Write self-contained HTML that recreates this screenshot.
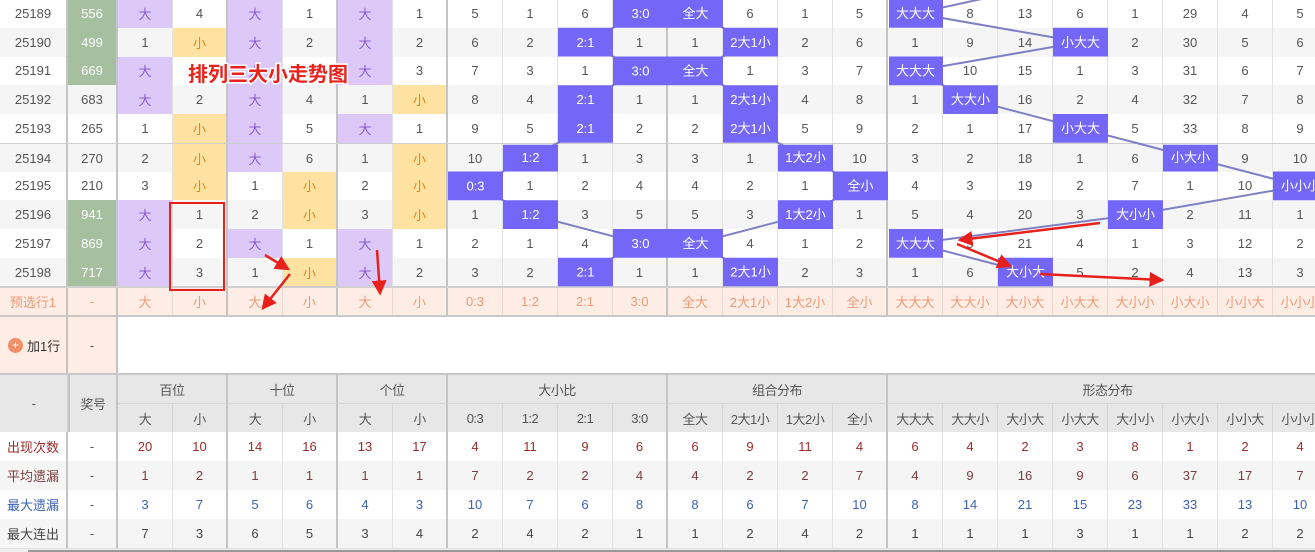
<!DOCTYPE html>
<html><head><meta charset="utf-8"><style>
*{box-sizing:border-box;margin:0;padding:0}
body{width:1315px;height:552px;overflow:hidden;background:#fff;font-family:"Liberation Sans","Noto Sans CJK SC",sans-serif;font-size:13px;color:#555;position:relative}
.r{position:absolute;left:0;display:grid;grid-template-columns:68px 50px repeat(22,55px);width:1328px}
.r i{font-style:normal;display:flex;align-items:center;justify-content:center;border-right:1px solid #e2e2e2;white-space:nowrap}
.r i:nth-child(1),.r i:nth-child(2),.r i:nth-child(4),.r i:nth-child(6),.r i:nth-child(8),.r i:nth-child(12),.r i:nth-child(16){border-right:2px solid #c4c4c4}
.d{height:28.75px}
.w{background:#fff}.s{background:#f5f5f5}
.p{background:#dcc9f7;color:#8a5bd0}
.y{background:#fde2a1;color:#e2861d}
.gr{background:#a6bf9f;color:#fff}
.pre{background:#fdede5;color:#ef9a78;border-bottom:2px solid #c8c8c8}
.pre i{border-right-color:#e8d8d0}
.hd{position:absolute;left:0;top:373px;display:grid;grid-template-columns:68px 50px repeat(22,55px);grid-template-rows:29px 29px;width:1328px;background:#e7e7e7;color:#555;border-top:2px solid #c8c8c8}
.hd i{font-style:normal;display:flex;align-items:center;justify-content:center;border-right:1px solid #d6d6d6;border-bottom:1px solid #d6d6d6;white-space:nowrap;letter-spacing:-0.5px}
.hd .G{border-right:2px solid #c4c4c4}
.c1{color:#9b2b2b}.c2{color:#7a3d3d}.c3{color:#3b63b3}.c4{color:#444}
</style></head><body>

<div class="r d w" style="top:-1px"><i>25189</i><i class="gr">556</i><i class="p">大</i><i>4</i><i class="p">大</i><i>1</i><i class="p">大</i><i>1</i><i>5</i><i>1</i><i>6</i><i></i><i></i><i>6</i><i>1</i><i>5</i><i></i><i>8</i><i>13</i><i>6</i><i>1</i><i>29</i><i>4</i><i>5</i></div>
<div class="r d s" style="top:27.75px"><i>25190</i><i class="gr">499</i><i>1</i><i class="y">小</i><i class="p">大</i><i>2</i><i class="p">大</i><i>2</i><i>6</i><i>2</i><i></i><i>1</i><i>1</i><i></i><i>2</i><i>6</i><i>1</i><i>9</i><i>14</i><i></i><i>2</i><i>30</i><i>5</i><i>6</i></div>
<div class="r d w" style="top:56.5px"><i>25191</i><i class="gr">669</i><i class="p">大</i><i>1</i><i class="p">大</i><i>3</i><i class="p">大</i><i>3</i><i>7</i><i>3</i><i>1</i><i></i><i></i><i>1</i><i>3</i><i>7</i><i></i><i>10</i><i>15</i><i>1</i><i>3</i><i>31</i><i>6</i><i>7</i></div>
<div class="r d s" style="top:85.25px"><i>25192</i><i>683</i><i class="p">大</i><i>2</i><i class="p">大</i><i>4</i><i>1</i><i class="y">小</i><i>8</i><i>4</i><i></i><i>1</i><i>1</i><i></i><i>4</i><i>8</i><i>1</i><i></i><i>16</i><i>2</i><i>4</i><i>32</i><i>7</i><i>8</i></div>
<div class="r d w" style="top:114px;border-bottom:2px solid #cfcfcf;height:30.75px"><i>25193</i><i>265</i><i>1</i><i class="y">小</i><i class="p">大</i><i>5</i><i class="p">大</i><i>1</i><i>9</i><i>5</i><i></i><i>2</i><i>2</i><i></i><i>5</i><i>9</i><i>2</i><i>1</i><i>17</i><i></i><i>5</i><i>33</i><i>8</i><i>9</i></div>
<div class="r d s" style="top:143.75px"><i>25194</i><i>270</i><i>2</i><i class="y">小</i><i class="p">大</i><i>6</i><i>1</i><i class="y">小</i><i>10</i><i></i><i>1</i><i>3</i><i>3</i><i>1</i><i></i><i>10</i><i>3</i><i>2</i><i>18</i><i>1</i><i>6</i><i></i><i>9</i><i>10</i></div>
<div class="r d w" style="top:171.5px"><i>25195</i><i>210</i><i>3</i><i class="y">小</i><i>1</i><i class="y">小</i><i>2</i><i class="y">小</i><i></i><i>1</i><i>2</i><i>4</i><i>4</i><i>2</i><i>1</i><i></i><i>4</i><i>3</i><i>19</i><i>2</i><i>7</i><i>1</i><i>10</i><i></i></div>
<div class="r d s" style="top:200.25px"><i>25196</i><i class="gr">941</i><i class="p">大</i><i>1</i><i>2</i><i class="y">小</i><i>3</i><i class="y">小</i><i>1</i><i></i><i>3</i><i>5</i><i>5</i><i>3</i><i></i><i>1</i><i>5</i><i>4</i><i>20</i><i>3</i><i></i><i>2</i><i>11</i><i>1</i></div>
<div class="r d w" style="top:229px"><i>25197</i><i class="gr">869</i><i class="p">大</i><i>2</i><i class="p">大</i><i>1</i><i class="p">大</i><i>1</i><i>2</i><i>1</i><i>4</i><i></i><i></i><i>4</i><i>1</i><i>2</i><i></i><i>5</i><i>21</i><i>4</i><i>1</i><i>3</i><i>12</i><i>2</i></div>
<div class="r d s" style="top:257.75px;border-bottom:2px solid #cfcfcf;height:30.5px"><i>25198</i><i class="gr">717</i><i class="p">大</i><i>3</i><i>1</i><i class="y">小</i><i class="p">大</i><i>2</i><i>3</i><i>2</i><i></i><i>1</i><i>1</i><i></i><i>2</i><i>3</i><i>1</i><i>6</i><i></i><i>5</i><i>2</i><i>4</i><i>13</i><i>3</i></div>
<div class="r pre" style="top:288px;height:29px"><i>预选行1</i><i>-</i><i>大</i><i>小</i><i>大</i><i>小</i><i>大</i><i>小</i><i>0:3</i><i>1:2</i><i>2:1</i><i>3:0</i><i>全大</i><i>2大1小</i><i>1大2小</i><i>全小</i><i>大大大</i><i>大大小</i><i>大小大</i><i>小大大</i><i>大小小</i><i>小大小</i><i>小小大</i><i>小小小</i></div>
<div class="r" style="top:317px;height:56px;grid-template-columns:68px 50px 1210px"><i style="background:#fdede5;color:#333;justify-content:flex-start;padding-left:8px"><span style="display:inline-block;width:15px;height:15px;border-radius:50%;background:#f0906a;color:#fff;font-size:12px;line-height:15px;text-align:center;margin-right:4px">+</span>加1行</i><i style="background:#fdede5">-</i><i style="border:none"></i></div>

<div class="hd">
<i style="grid-row:1/3">-</i><i class="G" style="grid-row:1/3;border-left:2px solid #c4c4c4">奖号</i>
<i class="G" style="grid-column:3/5">百位</i><i class="G" style="grid-column:5/7">十位</i><i class="G" style="grid-column:7/9">个位</i><i class="G" style="grid-column:9/13">大小比</i><i class="G" style="grid-column:13/17">组合分布</i><i style="grid-column:17/25">形态分布</i>
<i>大</i><i class="G">小</i><i>大</i><i class="G">小</i><i>大</i><i class="G">小</i><i>0:3</i><i>1:2</i><i>2:1</i><i class="G">3:0</i><i>全大</i><i>2大1小</i><i>1大2小</i><i class="G">全小</i><i>大大大</i><i>大大小</i><i>大小大</i><i>小大大</i><i>大小小</i><i>小大小</i><i>小小大</i><i>小小小</i>
</div>
<div class="r w c1" style="top:432px;height:29px"><i>出现次数</i><i style="color:#555">-</i><i>20</i><i>10</i><i>14</i><i>16</i><i>13</i><i>17</i><i>4</i><i>11</i><i>9</i><i>6</i><i>6</i><i>9</i><i>11</i><i>4</i><i>6</i><i>4</i><i>2</i><i>3</i><i>8</i><i>1</i><i>2</i><i>4</i></div>
<div class="r s c2" style="top:461px;height:29px"><i>平均遗漏</i><i style="color:#555">-</i><i>1</i><i>2</i><i>1</i><i>1</i><i>1</i><i>1</i><i>7</i><i>2</i><i>2</i><i>4</i><i>4</i><i>2</i><i>2</i><i>7</i><i>4</i><i>9</i><i>16</i><i>9</i><i>6</i><i>37</i><i>17</i><i>7</i></div>
<div class="r w c3" style="top:490px;height:29px"><i>最大遗漏</i><i style="color:#555">-</i><i>3</i><i>7</i><i>5</i><i>6</i><i>4</i><i>3</i><i>10</i><i>7</i><i>6</i><i>8</i><i>8</i><i>6</i><i>7</i><i>10</i><i>8</i><i>14</i><i>21</i><i>15</i><i>23</i><i>33</i><i>13</i><i>10</i></div>
<div class="r s c4" style="top:519px;height:29px"><i>最大连出</i><i style="color:#555">-</i><i>7</i><i>3</i><i>6</i><i>5</i><i>3</i><i>4</i><i>2</i><i>4</i><i>2</i><i>1</i><i>1</i><i>2</i><i>4</i><i>2</i><i>1</i><i>1</i><i>1</i><i>3</i><i>1</i><i>1</i><i>2</i><i>2</i></div>
<div style="position:absolute;left:0;top:548px;width:1315px;height:4px;background:#f0f0f0;border-top:1px solid #ddd"></div>
<div style="position:absolute;left:28px;top:550px;width:1287px;height:2px;background:#999"></div>

<svg width="1315" height="552" style="position:absolute;left:0;top:0" font-family="Liberation Sans, Noto Sans CJK SC, sans-serif" font-size="13">
<defs><marker id="ah" markerWidth="6" markerHeight="6" refX="5" refY="3" orient="auto"><path d="M0,0 L6,3 L0,6 z" fill="#e8201c"/></marker></defs>
<g stroke="#7f7fc4" stroke-width="2" fill="none">
<polyline points="610,-5 640.5,13.4 585.5,42.1 640.5,70.9 585.5,99.6 585.5,128.4 530.5,157.1 475.5,185.9 530.5,214.6 640.5,243.4 585.5,272.1"/>
<polyline points="695.5,13.4 750.5,42.1 695.5,70.9 750.5,99.6 750.5,128.4 805.5,157.1 860.5,185.9 805.5,214.6 695.5,243.4 750.5,272.1"/>
<polyline points="1000,-5 915.5,13.4 1080.5,42.1 915.5,70.9 970.5,99.6 1080.5,128.4 1190.5,157.1 1300.5,185.9 1135.5,214.6 915.5,243.4 1025.5,272.1"/>
</g>
<g fill="#7467f8">
<rect x="613" y="-1" width="55" height="28.75"/><rect x="558" y="27.75" width="55" height="28.75"/><rect x="613" y="56.5" width="55" height="28.75"/><rect x="558" y="85.25" width="55" height="28.75"/><rect x="558" y="114" width="55" height="28.75"/><rect x="503" y="144.75" width="55" height="26.75"/><rect x="448" y="171.5" width="55" height="28.75"/><rect x="503" y="200.25" width="55" height="28.75"/><rect x="613" y="229" width="55" height="28.75"/><rect x="558" y="257.75" width="55" height="28.5"/>
<rect x="668" y="-1" width="55" height="28.75"/><rect x="723" y="27.75" width="55" height="28.75"/><rect x="668" y="56.5" width="55" height="28.75"/><rect x="723" y="85.25" width="55" height="28.75"/><rect x="723" y="114" width="55" height="28.75"/><rect x="778" y="144.75" width="55" height="26.75"/><rect x="833" y="171.5" width="55" height="28.75"/><rect x="778" y="200.25" width="55" height="28.75"/><rect x="668" y="229" width="55" height="28.75"/><rect x="723" y="257.75" width="55" height="28.5"/>
<rect x="889" y="-1" width="54" height="28.75"/><rect x="1053" y="27.75" width="55" height="28.75"/><rect x="889" y="56.5" width="54" height="28.75"/><rect x="943" y="85.25" width="55" height="28.75"/><rect x="1053" y="114" width="55" height="28.75"/><rect x="1163" y="144.75" width="55" height="26.75"/><rect x="1273" y="171.5" width="55" height="28.75"/><rect x="1108" y="200.25" width="55" height="28.75"/><rect x="889" y="229" width="54" height="28.75"/><rect x="998" y="257.75" width="55" height="28.5"/>
</g>
<g fill="#fff" text-anchor="middle">
<text x="640.5" y="18">3:0</text><text x="585.5" y="47">2:1</text><text x="640.5" y="75.5">3:0</text><text x="585.5" y="104">2:1</text><text x="585.5" y="133">2:1</text><text x="530.5" y="162">1:2</text><text x="475.5" y="190.5">0:3</text><text x="530.5" y="219">1:2</text><text x="640.5" y="248">3:0</text><text x="585.5" y="276.5">2:1</text>
<text x="695.5" y="18">全大</text><text x="750.5" y="47">2大1小</text><text x="695.5" y="75.5">全大</text><text x="750.5" y="104">2大1小</text><text x="750.5" y="133">2大1小</text><text x="805.5" y="162">1大2小</text><text x="860.5" y="190.5">全小</text><text x="805.5" y="219">1大2小</text><text x="695.5" y="248">全大</text><text x="750.5" y="276.5">2大1小</text>
<text x="915.5" y="18">大大大</text><text x="1080.5" y="47">小大大</text><text x="915.5" y="75.5">大大大</text><text x="970.5" y="104">大大小</text><text x="1080.5" y="133">小大大</text><text x="1190.5" y="162">小大小</text><text x="1300.5" y="190.5">小小小</text><text x="1135.5" y="219">大小小</text><text x="915.5" y="248">大大大</text><text x="1025.5" y="276.5">大小大</text>
</g>
<text x="188" y="81" fill="#e8231e" font-size="20" font-weight="bold" stroke="#fff" stroke-width="3" paint-order="stroke">排列三大小走势图</text>
<rect x="170" y="203" width="54" height="87" fill="none" stroke="#e8201c" stroke-width="2"/>
<g stroke="#e8201c" stroke-width="2.5" marker-end="url(#ah)">
<line x1="265" y1="255" x2="288" y2="269"/>
<line x1="290" y1="274" x2="263" y2="308"/>
<line x1="377" y1="250" x2="380" y2="293"/>
<line x1="1100" y1="223" x2="960" y2="240"/>
<line x1="957" y1="244" x2="1010" y2="266"/>
<line x1="1040" y1="274" x2="1162" y2="280"/>
</g>
</svg>
</body></html>
